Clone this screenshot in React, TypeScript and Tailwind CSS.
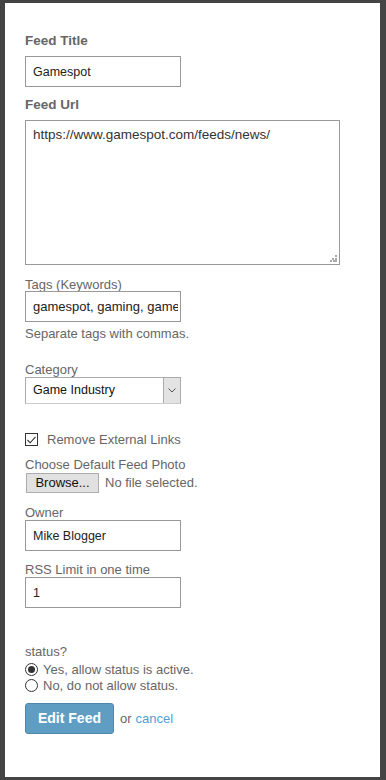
import React from "react";

const FONT = "font-['Liberation_Sans',Arial,sans-serif]";

function Label({ children, className = "" }: { children: React.ReactNode; className?: string }) {
  return <div className={`text-[13px] leading-[13px] text-[#666] ${className}`}>{children}</div>;
}

function TextBox({ value, className = "" }: { value: string; className?: string }) {
  return (
    <input
      readOnly
      value={value}
      className={`block w-[156px] h-[31px] border border-[#999] bg-white pl-[7px] pr-[2px] text-[12.5px] text-[#222] outline-none ${FONT} ${className}`}
    />
  );
}

function Radio({ checked, label, className = "" }: { checked?: boolean; label: string; className?: string }) {
  return (
    <div className={`flex items-center h-[13px] gap-[5px] ${className}`}>
      <span className="w-[13px] h-[13px] rounded-full border border-[#333] bg-white flex items-center justify-center">
        {checked && <span className="w-[7px] h-[7px] rounded-full bg-[#333]" />}
      </span>
      <span className="text-[13px] leading-[13px] text-[#666]">{label}</span>
    </div>
  );
}

export default function App() {
  return (
    <div className={`min-h-[780px] bg-[#444] pt-[3px] pl-[5px] ${FONT}`}>
      <div className="w-[375px] h-[774px] bg-white pl-[20px] pt-[30px] flex flex-col items-start">
        <div className="text-[13.5px] leading-[16px] font-bold text-[#666]">Feed Title</div>
        <TextBox value="Gamespot" className="mt-[7px]" />

        <div className="mt-[10px] text-[13.5px] leading-[16px] font-bold text-[#666]">Feed Url</div>
        <div className="relative mt-[7px]">
          <textarea
            readOnly
            value="https://www.gamespot.com/feeds/news/"
            className={`block w-[315px] h-[145px] resize-none border border-[#999] bg-white pl-[7px] pt-[6px] text-[13.5px] leading-[16px] text-[#333] outline-none ${FONT}`}
          />
          {/* resize grip */}
          <svg className="absolute right-[3px] bottom-[3px]" width="7" height="7" viewBox="0 0 7 7">
            <rect x="5" y="0" width="2" height="2" fill="#aaa" />
            <rect x="2" y="3" width="2" height="2" fill="#aaa" />
            <rect x="5" y="3" width="2" height="2" fill="#aaa" />
            <rect x="0" y="5" width="2" height="2" fill="#aaa" />
            <rect x="3" y="5" width="2" height="2" fill="#aaa" />
            <rect x="5" y="5" width="2" height="2" fill="#aaa" />
          </svg>
        </div>

        <Label className="mt-[13px]">Tags (Keywords)</Label>
        <TextBox value="gamespot, gaming, game industry" className="text-[13px]" />
        <Label className="mt-[5px]">Separate tags with commas.</Label>

        <Label className="mt-[23px]">Category</Label>
        <div className="mt-[1px] w-[156px] h-[27px] border border-[#aaa] border-b-[#ccc] flex items-stretch">
          <span className="flex-1 flex items-center pl-[7px] text-[12.5px] text-[#111]">Game Industry</span>
          <span className="w-[17px] bg-[#e3e3e3] border-l border-[#aaa] flex items-center justify-center">
            <svg width="8" height="5" viewBox="0 0 8 5">
              <polyline points="0.5,0.5 4,4 7.5,0.5" fill="none" stroke="#555" strokeWidth="1" />
            </svg>
          </span>
        </div>

        <div className="mt-[29px] flex items-center h-[13px] gap-[9px]">
          <span className="w-[13px] h-[13px] border border-[#333] bg-white flex items-center justify-center">
            <svg width="9" height="8" viewBox="0 0 9 8">
              <polyline points="0.5,4 3.2,6.8 8.5,0.8" fill="none" stroke="#333" strokeWidth="1.1" />
            </svg>
          </span>
          <span className="text-[13px] leading-[13px] text-[#666]">Remove External Links</span>
        </div>

        <Label className="mt-[12px]">Choose Default Feed Photo</Label>
        <div className="mt-[2px] flex items-center gap-[6px] pl-[1px]">
          <span className="w-[73px] h-[20px] bg-[#e1e1e1] border border-[#adadad] flex items-center justify-center text-[13px] text-[#111]">
            Browse...
          </span>
          <span className="text-[13px] text-[#666]">No file selected.</span>
        </div>

        <Label className="mt-[13px]">Owner</Label>
        <TextBox value="Mike Blogger" className="mt-[1px]" />

        <Label className="mt-[12px]">RSS Limit in one time</Label>
        <TextBox value="1" className="mt-[1px]" />

        <Label className="mt-[37px]">status?</Label>
        <Radio checked label="Yes, allow status is active." className="mt-[5px]" />
        <Radio label="No, do not allow status." className="mt-[3px]" />

        <div className="mt-[11px] flex items-center">
          <button className="w-[89px] h-[31px] rounded-[3px] bg-[#5f9ec2] border border-[#4d88aa] text-white text-[14px] font-bold">
            Edit Feed
          </button>
          <span className="ml-[6px] text-[13px] text-[#666]">or </span>
          <a className="ml-[4px] text-[13px] text-[#4e9fd8] cursor-pointer">cancel</a>
        </div>
      </div>
    </div>
  );
}
